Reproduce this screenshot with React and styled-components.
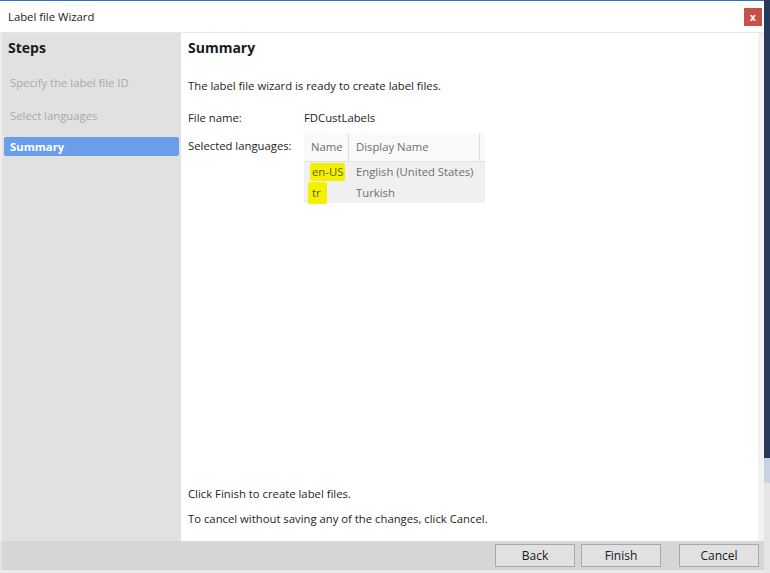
import React from "react";
import styled, { createGlobalStyle } from "styled-components";

const GlobalStyle = createGlobalStyle`
  html, body {
    margin: 0;
    padding: 0;
    background: #ffffff;
  }
  body {
    font-family: "Open Sans", "Noto Sans", sans-serif;
    font-size: 11px;
    color: #1e1e1e;
  }
`;

const Screen = styled.div`
  display: flex;
  width: 770px;
  height: 573px;
  overflow: hidden;
`;

const Desktop = styled.div`
  width: 6px;
  background: linear-gradient(
    to bottom,
    #27395e 0,
    #27395e 458px,
    #c9d2e3 458px,
    #c9d2e3 483px,
    #e6e6e6 483px
  );
`;

const Window = styled.div`
  flex: 1;
  display: flex;
  flex-direction: column;
  border-top: 1px solid #2b6fbf;
  background: #fff;
`;

const TitleBar = styled.div`
  height: 31px;
  display: flex;
  align-items: center;
  justify-content: space-between;
  padding: 0 2px 0 8px;
  border-bottom: 1px solid #e6e6e6;
`;

const Title = styled.div`
  font-size: 11.3px;
  color: #1a1a1a;
`;

const CloseButton = styled.div`
  width: 18px;
  height: 18px;
  background: #c9504a;
  color: #fff;
  font-size: 10px;
  font-weight: 700;
  display: flex;
  align-items: center;
  justify-content: center;
`;

const Body = styled.div`
  flex: 1;
  display: flex;
  border-left: 2px solid #ededed;
`;

const Steps = styled.div`
  width: 179px;
  background: #e1e1e1;
  padding: 5px 2px 0 2px;
  box-sizing: border-box;
`;

const Heading = styled.div`
  font-size: 14px;
  font-weight: 700;
  color: #1a1a1a;
  padding-left: ${(p) => p.$indent || 0}px;
  height: 20px;
  line-height: 20px;
`;

const StepList = styled.div`
  display: flex;
  flex-direction: column;
  margin-top: 15px;
`;

const Step = styled.div`
  height: 19px;
  line-height: 19px;
  margin-bottom: ${(p) => (p.$active ? 0 : 14)}px;
  margin-top: ${(p) => (p.$active ? -2 : 0)}px;
  padding-left: 6px;
  border-radius: 2px;
  font-size: 11.3px;
  color: ${(p) => (p.$active ? "#ffffff" : "#a9a9a9")};
  font-weight: ${(p) => (p.$active ? 700 : 400)};
  background: ${(p) => (p.$active ? "#6b9ee9" : "transparent")};
`;

const Main = styled.div`
  flex: 1;
  display: flex;
  flex-direction: column;
  padding: 5px 0 14px 7px;
  border-right: 6px solid #f2f2f2;
`;

const Text = styled.div`
  font-size: 11.3px;
  line-height: 16px;
  margin-top: ${(p) => p.$top || 0}px;
`;

const Field = styled.div`
  display: grid;
  grid-template-columns: 116px auto;
  align-items: start;
  margin-top: ${(p) => p.$top || 0}px;
  font-size: 11.3px;
  line-height: 16px;
`;

const FieldLabel = styled.div`
  padding-top: ${(p) => p.$pad || 0}px;
`;

const Table = styled.div`
  width: 181px;
  background: #f0f0f0;
  color: #6e6e6e;
  font-size: 11.3px;
`;

const Row = styled.div`
  display: grid;
  grid-template-columns: 45px 131px 5px;
  height: ${(p) => p.$h}px;
  align-items: center;
`;

const HeadRow = styled(Row)`
  background: #f9f9f9;
  border-bottom: 1px solid #e0e0e0;
  height: 28px;
`;

const HeadCell = styled.div`
  height: 100%;
  display: flex;
  align-items: center;
  padding-left: 7px;
  border-right: 1px solid #dedede;
`;

const Cell = styled.div`
  padding-left: ${(p) => p.$pad ?? 7}px;
`;

const Marker = styled.span`
  background: #f4f100;
  color: #5c5c2a;
  padding: ${(p) => p.$pad};
  border-radius: 2px;
`;

const Spacer = styled.div`
  flex: 1;
`;

const Footer = styled.div`
  height: 29px;
  background: #d6d6d6;
  display: flex;
  align-items: center;
  justify-content: flex-end;
  padding-right: 5px;
  gap: 6px;
  border-left: 2px solid #e2e2e2;
`;

const Button = styled.button`
  width: 80px;
  height: 23px;
  margin-left: ${(p) => p.$gap || 0}px;
  border: 1px solid #a8a8a8;
  background: #e1e1e1;
  font-family: "Open Sans", "Noto Sans", sans-serif;
  font-size: 12px;
  color: #1a1a1a;
  padding: 0;
`;

const BottomStrip = styled.div`
  height: 3px;
  background: #ebebeb;
`;

export default function App() {
  return (
    <>
      <GlobalStyle />
      <Screen>
        <Window>
          <TitleBar>
            <Title>Label file Wizard</Title>
            <CloseButton>x</CloseButton>
          </TitleBar>
          <Body>
            <Steps>
              <Heading $indent={4}>Steps</Heading>
              <StepList>
                <Step>Specify the label file ID</Step>
                <Step>Select languages</Step>
                <Step $active>Summary</Step>
              </StepList>
            </Steps>
            <Main>
              <Heading>Summary</Heading>
              <Text $top={20}>The label file wizard is ready to create label files.</Text>
              <Field $top={16}>
                <FieldLabel>File name:</FieldLabel>
                <div>FDCustLabels</div>
              </Field>
              <Field $top={7}>
                <FieldLabel $pad={5}>Selected languages:</FieldLabel>
                <Table>
                  <HeadRow>
                    <HeadCell>Name</HeadCell>
                    <HeadCell>Display Name</HeadCell>
                    <div />
                  </HeadRow>
                  <Row $h={20}>
                    <Cell $pad={6}>
                      <Marker $pad="1px 2px 2px 2px">en-US</Marker>
                    </Cell>
                    <Cell>English (United States)</Cell>
                  </Row>
                  <Row $h={21}>
                    <Cell $pad={4}>
                      <Marker $pad="3px 6px 4px 4px">tr</Marker>
                    </Cell>
                    <Cell>Turkish</Cell>
                  </Row>
                </Table>
              </Field>
              <Spacer />
              <Text>Click Finish to create label files.</Text>
              <Text $top={9}>To cancel without saving any of the changes, click Cancel.</Text>
            </Main>
          </Body>
          <Footer>
            <Button>Back</Button>
            <Button>Finish</Button>
            <Button $gap={12}>Cancel</Button>
          </Footer>
          <BottomStrip />
        </Window>
        <Desktop />
      </Screen>
    </>
  );
}
